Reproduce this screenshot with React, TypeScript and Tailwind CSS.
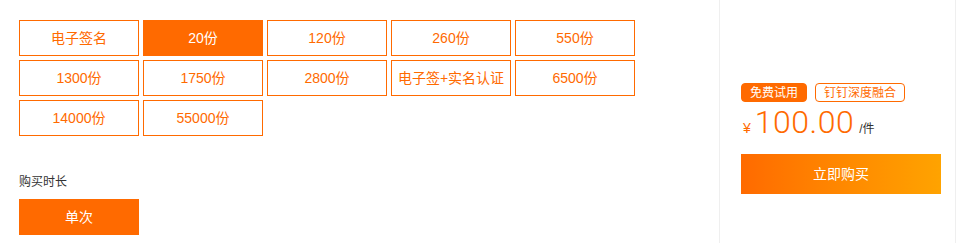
import { useState } from 'react';

const specs = ['电子签名', '20份', '120份', '260份', '550份', '1300份', '1750份', '2800份', '电子签+实名认证', '6500份', '14000份', '55000份'];

export default function App() {
  const [active, setActive] = useState(1);

  return (
    <div className="w-[957px] h-[243px] flex bg-white overflow-hidden" style={{ fontFamily: '"Liberation Sans", "Noto Sans CJK SC", sans-serif' }}>
      {/* Options */}
      <div className="w-[719px] pl-[19px] pt-[20px]">
        <div className="grid grid-cols-[repeat(5,120px)] gap-1">
          {specs.map((s, i) => (
            <button key={s} onClick={() => setActive(i)}
              className={`h-9 border text-[14px] flex items-center justify-center whitespace-nowrap ${i === active ? 'bg-[#ff6a00] border-[#ff6a00] text-white' : 'bg-white border-[#ff6a00] text-[#ff6a00]'}`}
            >{s}</button>
          ))}
        </div>
        <div className="mt-[37px] text-[12px] leading-[18px] text-[#333]">购买时长</div>
        <button className="mt-2 w-[120px] h-9 bg-[#ff6a00] text-white text-[14px] flex items-center justify-center">单次</button>
      </div>

      {/* Price panel */}
      <div className="w-[237px] h-full border-x border-[#efefef] pl-[21px] pt-[83px]">
        <div className="flex gap-2">
          <span className="h-[19px] px-2 rounded border border-[#ff6a00] bg-[#ff6a00] text-white text-[12px] flex items-center">免费试用</span>
          <span className="h-[19px] px-2 rounded border border-[#ff6a00] text-[#ff6a00] text-[12px] flex items-center">钉钉深度融合</span>
        </div>
        <div className="mt-[2px] flex items-baseline leading-[36px]">
          <span className="text-[14px] text-[#ff6a00] ml-[2px] mr-[4px]">¥</span>
          <span className="text-[32px] font-light text-[#ff6a00] tracking-[0.5px]" style={{ fontFamily: 'Roboto, "Liberation Sans", sans-serif' }}>100.00</span>
          <span className="text-[12px] text-[#333] ml-[5px]">/件</span>
        </div>
        <button className="mt-[7px] w-[200px] h-10 bg-gradient-to-r from-[#ff6a00] to-[#ffa300] text-white text-[14px] flex items-center justify-center">立即购买</button>
      </div>
    </div>
  );
}
